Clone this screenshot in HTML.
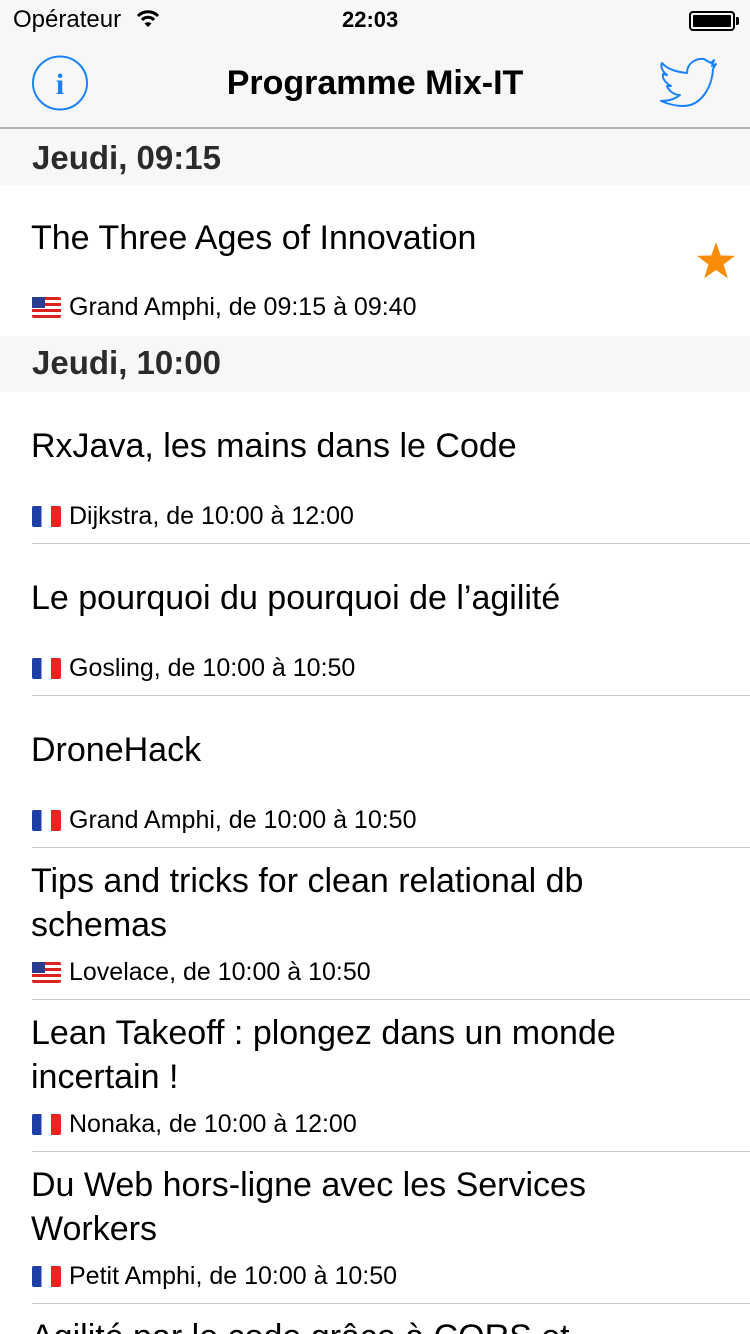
<!DOCTYPE html>
<html style="width:750px;height:1334px;overflow:hidden"><head><meta charset="utf-8">
<style>
*{margin:0;padding:0;box-sizing:border-box}
body{width:750px;height:1334px;overflow:hidden;background:#fff;font-family:"Liberation Sans",sans-serif;position:relative;color:#000}
.abs{position:absolute}
.top{left:0;top:0;width:750px;height:129px;background:#f7f7f7;border-bottom:2px solid #b2b2b2}
.hdr{left:0;width:750px;height:56px;background:#f7f7f7}
.hdr span{position:absolute;left:32px;top:10px;font-size:33px;font-weight:bold;color:#2b2b2b}
.t{left:31px;font-size:34px;line-height:44px;white-space:nowrap}
.s{left:69px;font-size:25px;line-height:28px;white-space:nowrap}
.sep{left:32px;width:718px;height:1px;background:#c8c7cc}
.fr{left:32px;width:29px;height:21px;background:linear-gradient(90deg,#1d3fa8 0 33%,#fff 33% 66%,#e22 66%);border-radius:2px}
.us{left:32px;width:29px;height:21px;border-radius:2px;background:repeating-linear-gradient(180deg,#d22 0 3px,#fff 3px 6px)}
.us:before{content:"";position:absolute;left:0;top:0;width:13px;height:11px;background:#2b3d8f}
</style></head><body>
<div class="abs top"></div>
<div class="abs" style="left:13px;top:6px;font-size:24px">Opérateur</div>
<svg class="abs" style="left:136px;top:10px" width="24" height="18" viewBox="0 0 24 18"><path d="M2 6 A14 14 0 0 1 22 6" stroke="#000" stroke-width="3" fill="none"/><path d="M6 10 A8 8 0 0 1 18 10" stroke="#000" stroke-width="3" fill="none"/><path d="M12 17 L8.5 13.5 A5 5 0 0 1 15.5 13.5Z" fill="#000"/></svg>
<div class="abs" style="left:342px;top:7px;font-size:22px;font-weight:bold">22:03</div>
<div class="abs" style="left:689px;top:11px;width:46px;height:20px;border:2px solid #000;border-radius:4px;padding:2px"><div style="width:100%;height:100%;background:#000;border-radius:1px"></div></div>
<div class="abs" style="left:736px;top:17px;width:3px;height:8px;background:#000;border-radius:0 2px 2px 0"></div>
<svg class="abs" style="left:31px;top:54px" width="58" height="58"><ellipse cx="29" cy="29" rx="27" ry="26.5" stroke="#1a82fb" stroke-width="2" fill="none"/><text x="29" y="40" font-family="Liberation Serif" font-weight="bold" font-size="30" fill="#1a82fb" text-anchor="middle">i</text></svg>
<div class="abs" style="left:0;width:750px;top:64px;text-align:center;font-size:34px;font-weight:bold">Programme Mix-IT</div>
<svg class="abs" style="left:0;top:0" width="750" height="130"><path d="M662 63 C668 70 678 72 687 73 C687 63 696 58 704 59 C707 61 709 62 711 63 L714 60 L712 66 L716 64 L713 69 C712 86 702 106 683 106 C676 106 668 104 661 101 C668 101 675 99 680 95 C674 95 669 91 667 86 L671 86 C666 83 662 79 663 74 L667 75 C663 72 660 67 662 63Z" stroke="#1a82fb" stroke-width="2" fill="none" stroke-linejoin="round"/></svg>

<div class="abs hdr" style="top:129px"><span style="top:10px">Jeudi, 09:15</span></div>
<div class="abs t" style="top:216px">The Three Ages of Innovation</div>
<div class="abs us" style="top:297px"></div><div class="abs s" style="top:293px">Grand Amphi, de 09:15 à 09:40</div>
<svg class="abs" style="left:696px;top:241px" width="40" height="40" viewBox="0 0 40 40"><path d="M20 1 L24.7 14.5 L39 14.8 L27.6 23.5 L31.8 37.2 L20 29 L8.2 37.2 L12.4 23.5 L1 14.8 L15.3 14.5Z" fill="#f98b0a"/></svg>

<div class="abs hdr" style="top:336px"><span style="top:8px">Jeudi, 10:00</span></div>

<div class="abs t" style="top:424px">RxJava, les mains dans le Code</div>
<div class="abs fr" style="top:506px"></div><div class="abs s" style="top:502px">Dijkstra, de 10:00 à 12:00</div>
<div class="abs sep" style="top:543px"></div>

<div class="abs t" style="top:576px">Le pourquoi du pourquoi de l’agilité</div>
<div class="abs fr" style="top:658px"></div><div class="abs s" style="top:654px">Gosling, de 10:00 à 10:50</div>
<div class="abs sep" style="top:695px"></div>

<div class="abs t" style="top:728px">DroneHack</div>
<div class="abs fr" style="top:810px"></div><div class="abs s" style="top:806px">Grand Amphi, de 10:00 à 10:50</div>
<div class="abs sep" style="top:847px"></div>

<div class="abs t" style="top:859px">Tips and tricks for clean relational db<br>schemas</div>
<div class="abs us" style="top:962px"></div><div class="abs s" style="top:958px">Lovelace, de 10:00 à 10:50</div>
<div class="abs sep" style="top:999px"></div>

<div class="abs t" style="top:1011px">Lean Takeoff : plongez dans un monde<br>incertain !</div>
<div class="abs fr" style="top:1114px"></div><div class="abs s" style="top:1110px">Nonaka, de 10:00 à 12:00</div>
<div class="abs sep" style="top:1151px"></div>

<div class="abs t" style="top:1163px">Du Web hors-ligne avec les Services<br>Workers</div>
<div class="abs fr" style="top:1266px"></div><div class="abs s" style="top:1262px">Petit Amphi, de 10:00 à 10:50</div>
<div class="abs sep" style="top:1303px"></div>

<div class="abs t" style="top:1315px">Agilité par le code grâce à CORS et</div>
</body></html>
